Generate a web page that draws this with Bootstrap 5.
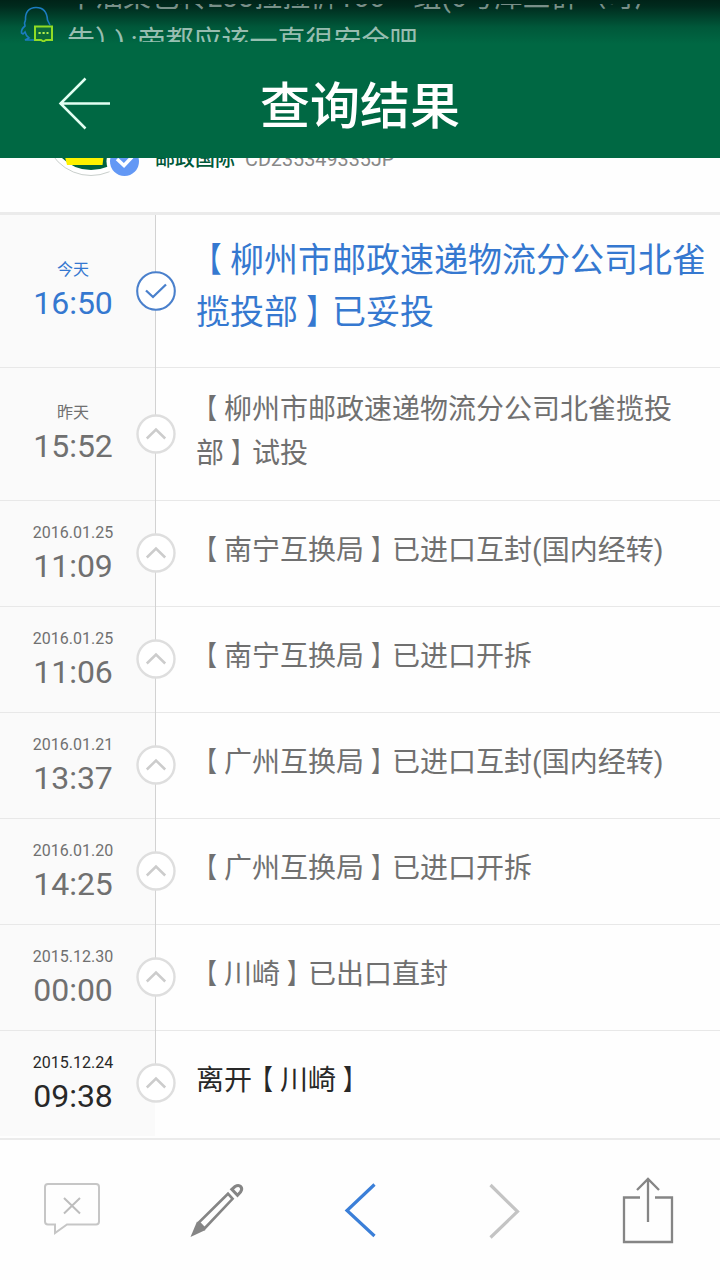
<!DOCTYPE html>
<html lang="zh-CN">
<head>
<meta charset="utf-8">
<meta name="viewport" content="width=device-width, initial-scale=1">
<title>查询结果</title>
<link rel="stylesheet" href="https://cdn.jsdelivr.net/npm/bootstrap@5.3.0/dist/css/bootstrap.min.css">
<style>
  body { font-family: Roboto, "Noto Sans CJK SC", sans-serif; width: 720px; height: 1280px; overflow: hidden; background: #fefefe; color: #707070; }
  .top-area { height: 158px; color: #fff; background: linear-gradient(#002318 0, #002a1d 6px, #00583a 27px, #006843 44px, #006843 100%); }
  .status { height: 42px; padding-left: 20px; }
  .ticker { height: 38px; margin-top: 4px; margin-left: 12px; font-size: 28px; line-height: 41px; color: rgba(255,255,255,.62); white-space: nowrap; }
  .ticker .line-out { margin-top: -27px; margin-bottom: 3px; opacity: .8; }
  .ticker .closers { letter-spacing: 6px; }
  .title-row { height: 116px; }
  .back-btn { width: 52px; margin-left: 58px; }
  .title-text { font-size: 50px; line-height: 60px; font-weight: 500; margin-right: 110px; padding-top: 13px; }
  .parcel { height: 54px; }
  .parcel svg { margin-left: 50px; }
  .parcel-text { margin-left: 15px; margin-top: -11px; font-size: 20px; line-height: 24px; white-space: nowrap; }
  .carrier { color: #00593a; font-weight: 500; }
  .number { color: #888; margin-left: 10px; font-size: 19.8px; }
  .track { border-top: 3px solid #ebebeb; }
  .step { height: 106px; border-bottom: 1px solid #e8e8e8; }
  .step-today { height: 153px; }
  .step-two { height: 133px; }
  .step-last { border-bottom-color: transparent; }
  .when { width: 155px; background: #fafafa; padding: 0 9px 2px 0; }
  .when .day { font-size: 16px; line-height: 26px; }
  .when .hour { font-size: 32px; line-height: 40px; }
  .rail { width: 1px; background: #d2d2d2; margin-bottom: -1px; }
  .step-last .rail { margin-bottom: 50px; }
  .dot { width: 40px; height: 40px; margin: 0 0 1px -20px; z-index: 1; }
  .what { margin-left: 20px; font-size: 28px; line-height: 44px; white-space: nowrap; padding-bottom: 5px; }
  .step-today .what { font-size: 34px; line-height: 52px; padding-bottom: 11px; }
  .step-today { color: #3578d0; }
  .step-last { color: #282828; }
  .bl, .br { display: inline-block; line-height: 1; }
  .bl { transform: translateX(-.15em) scaleX(.8); }
  .br { transform: translateX(.15em) scaleX(.8); }
  .tools { height: 142px; margin-top: 1px; border-top: 2px solid #ebebeb; }
</style>
</head>
<body>
<header class="top-area">
  <div class="status d-flex overflow-hidden">
    <svg class="flex-shrink-0" width="35" height="42" fill="none" stroke-width="1.6">
      <path d="M5.500 20C5 12 9 7.500 16 7.500S27 12 27.500 20L30 25M5.500 20L4.500 23 5 26Q1 29 1.500 33L3 34 5 32Q6 36 9 38L5 40H14" stroke="#1b7cc0"/>
      <path d="M15 26.500H32V40H26L23.500 41.500 21 40H15Z" fill="#0d6b38" stroke="#91dc25" stroke-width="2"/>
      <path d="M18.500 33H28.500" stroke="#b4ee4d" stroke-width="2.200" stroke-dasharray="2.200 1.800"/>
    </svg>
    <div class="ticker overflow-hidden">
      <div class="line-out">十油菜包转Loo拉拉裤100一组(6号库三群（可广</div>
      <div>告<span class="closers">）)</span>:帝都应该一直很安全吧</div>
    </div>
  </div>
  <div class="title-row d-flex align-items-center">
    <svg class="back-btn flex-shrink-0" height="60" fill="none" stroke="#e2fff2" stroke-width="2.500"><path d="M27.500 8.500L2.500 33.500 27.500 58.500M2.500 33.500H52"/></svg>
    <h1 class="title-text flex-grow-1 text-center mb-0">查询结果</h1>
  </div>
</header>
<section class="parcel d-flex overflow-hidden">
  <svg class="flex-shrink-0" width="90" height="24">
    <circle cx="41" cy="-29" r="46.500" fill="#fff" stroke="#c9cfcc"/>
    <circle cx="41" cy="-29" r="41" fill="#00623f"/>
    <path d="M14 -5H54L52.500 7H17Z" fill="#fff200"/>
    <circle cx="74.500" cy="3.500" r="18" fill="#fefefe"/>
    <circle cx="74.500" cy="3.500" r="14.500" fill="#6398f5"/>
    <path d="M67 1L74 7.500 82 -1" stroke="#fff" stroke-width="3.500" fill="none"/>
  </svg>
  <div class="parcel-text"><span class="carrier">邮政国际</span><span class="number">CD235349335JP</span></div>
</section>
<svg width="0" height="0" class="d-none">
  <symbol id="up" viewBox="0 0 40 40"><circle cx="20" cy="20" r="18.500" fill="#fff" stroke="#dedede" stroke-width="2.400"/><path d="M10.800 24.500L20 15.500 29.200 24.500" fill="none" stroke="#ccc" stroke-width="2.500"/></symbol>
</svg>
<main class="track">
  <div class="step step-today d-flex">
    <div class="when d-flex flex-column justify-content-center align-items-center"><div class="day">今天</div><div class="hour">16:50</div></div>
    <div class="rail"></div>
    <svg class="dot align-self-center flex-shrink-0" fill="none" stroke="#4a80cc"><circle cx="20" cy="20" r="18.800" fill="#fff" stroke-width="2.100"/><path d="M10 19.500L17 26 30 13.500" stroke-width="2.300"/></svg>
    <div class="what align-self-center"><span class="bl">【</span>柳州市邮政速递物流分公司北雀<br>揽投部<span class="br">】</span>已妥投</div>
  </div>
  <div class="step step-two d-flex">
    <div class="when d-flex flex-column justify-content-center align-items-center"><div class="day">昨天</div><div class="hour">15:52</div></div>
    <div class="rail"></div>
    <svg class="dot align-self-center flex-shrink-0"><use href="#up"/></svg>
    <div class="what align-self-center"><span class="bl">【</span>柳州市邮政速递物流分公司北雀揽投<br>部<span class="br">】</span>试投</div>
  </div>
  <div class="step d-flex">
    <div class="when d-flex flex-column justify-content-center align-items-center"><div class="day">2016.01.25</div><div class="hour">11:09</div></div>
    <div class="rail"></div>
    <svg class="dot align-self-center flex-shrink-0"><use href="#up"/></svg>
    <div class="what align-self-center"><span class="bl">【</span>南宁互换局<span class="br">】</span>已进口互封(国内经转)</div>
  </div>
  <div class="step d-flex">
    <div class="when d-flex flex-column justify-content-center align-items-center"><div class="day">2016.01.25</div><div class="hour">11:06</div></div>
    <div class="rail"></div>
    <svg class="dot align-self-center flex-shrink-0"><use href="#up"/></svg>
    <div class="what align-self-center"><span class="bl">【</span>南宁互换局<span class="br">】</span>已进口开拆</div>
  </div>
  <div class="step d-flex">
    <div class="when d-flex flex-column justify-content-center align-items-center"><div class="day">2016.01.21</div><div class="hour">13:37</div></div>
    <div class="rail"></div>
    <svg class="dot align-self-center flex-shrink-0"><use href="#up"/></svg>
    <div class="what align-self-center"><span class="bl">【</span>广州互换局<span class="br">】</span>已进口互封(国内经转)</div>
  </div>
  <div class="step d-flex">
    <div class="when d-flex flex-column justify-content-center align-items-center"><div class="day">2016.01.20</div><div class="hour">14:25</div></div>
    <div class="rail"></div>
    <svg class="dot align-self-center flex-shrink-0"><use href="#up"/></svg>
    <div class="what align-self-center"><span class="bl">【</span>广州互换局<span class="br">】</span>已进口开拆</div>
  </div>
  <div class="step d-flex">
    <div class="when d-flex flex-column justify-content-center align-items-center"><div class="day">2015.12.30</div><div class="hour">00:00</div></div>
    <div class="rail"></div>
    <svg class="dot align-self-center flex-shrink-0"><use href="#up"/></svg>
    <div class="what align-self-center"><span class="bl">【</span>川崎<span class="br">】</span>已出口直封</div>
  </div>
  <div class="step step-last d-flex">
    <div class="when d-flex flex-column justify-content-center align-items-center"><div class="day">2015.12.24</div><div class="hour">09:38</div></div>
    <div class="rail"></div>
    <svg class="dot align-self-center flex-shrink-0"><use href="#up"/></svg>
    <div class="what align-self-center">离开<span class="bl">【</span>川崎<span class="br">】</span></div>
  </div>
</main>
<nav class="tools row g-0 row-cols-5">
  <div class="col"><svg width="144" height="140" fill="none" stroke="#c6c6c6" stroke-width="2"><path d="M48 44H96Q99 44 99 47V81.500Q99 84.500 96 84.500H67L55 93V84.500H48Q45 84.500 45 81.500V47Q45 44 48 44Z"/><path d="M64 58L80 73.500M80 58L64 73.500" stroke="#bdbdbd"/></svg></div>
  <div class="col"><svg width="144" height="140" fill="none" stroke="#858585" stroke-width="2.600"><path d="M84 53.700L88.600 58.800 60.500 88.500 54.800 82.500Z"/><path d="M46.500 97L53 81.500 57 85.500 61.500 90Z" fill="#858585" stroke="none"/><path d="M87.800 49.300L91 46.500C96 43.500 99.500 48 96.500 52L93.500 55.300Z" stroke-width="3"/></svg></div>
  <div class="col"><svg width="144" height="140" fill="none" stroke="#3b7fd8" stroke-width="3.200"><path d="M86.500 44.500L59 70.500 86.500 96"/></svg></div>
  <div class="col"><svg width="144" height="140" fill="none" stroke="#c4c4c4" stroke-width="3.200"><path d="M58.500 45L85.500 71.500 58.500 97.500"/></svg></div>
  <div class="col"><svg width="144" height="140" fill="none" stroke="#858585" stroke-width="2.300"><path d="M64 57.500H48V102H96V57.500H79M72 82V39M61 50L72 39 83 50"/></svg></div>
</nav>
<script src="https://cdn.jsdelivr.net/npm/bootstrap@5.3.0/dist/js/bootstrap.bundle.min.js"></script>
</body>
</html>
